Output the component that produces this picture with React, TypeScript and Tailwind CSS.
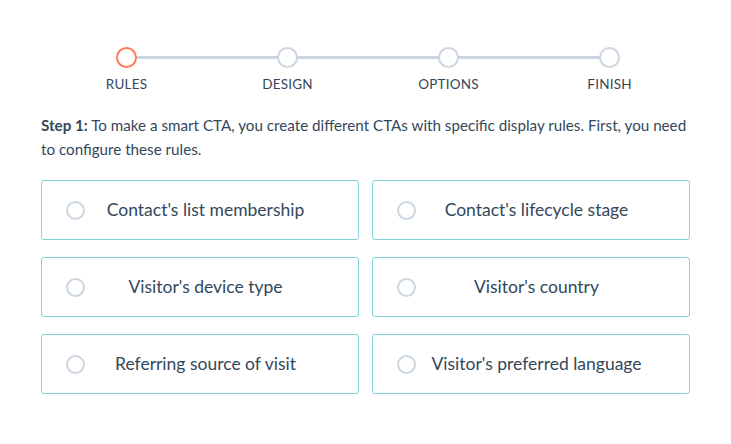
import React from 'react';

const steps = ['RULES', 'DESIGN', 'OPTIONS', 'FINISH'];

const rules = [
  "Contact's list membership",
  "Contact's lifecycle stage",
  "Visitor's device type",
  "Visitor's country",
  'Referring source of visit',
  "Visitor's preferred language",
];

const Stepper: React.FC = () => (
  <div className="relative grid grid-cols-4 pl-[5px]">
    {/* connecting line between the first and last markers */}
    <div className="absolute top-[9px] left-[12.5%] right-[12.5%] h-[3px] bg-[#cbd6e2] ml-[2px]" />
    {steps.map((s, i) => (
      <div key={s} className="relative flex flex-col items-center">
        <div
          className={`w-[21px] h-[21px] rounded-full bg-white border-[2.5px] ${
            i === 0 ? 'border-[#ff7a59]' : 'border-[#cbd6e2]'
          }`}
        />
        <span className="mt-[6px] text-[13.5px] text-[#33475b] tracking-[0.2px]">{s}</span>
      </div>
    ))}
  </div>
);

const RuleCard: React.FC<{ label: string }> = ({ label }) => (
  <button className="flex items-center h-[60px] px-6 bg-white border border-[#7fd1de] rounded-[3px] text-left">
    <span className="w-[19px] h-[19px] rounded-full border-2 border-[#cbd6e2] shrink-0" />
    <span className="flex-1 text-center pr-[8px] text-[17.5px] text-[#33475b]">{label}</span>
  </button>
);

export default function App() {
  return (
    <div
      className="w-[731px] h-[444px] bg-white px-[41px] pt-[47px]"
      style={{ fontFamily: 'Lato, "Open Sans", sans-serif' }}
    >
      <Stepper />
      <p className="mt-[19px] text-[15.2px] leading-[24px] text-[#33475b]">
        <span className="font-bold">Step 1:</span> To make a smart CTA, you create different CTAs with specific
        display rules. First, you need to configure these rules.
      </p>
      <div className="mt-[19px] grid grid-cols-2 gap-x-[13px] gap-y-[17px] w-[649px]">
        {rules.map(r => (
          <RuleCard key={r} label={r} />
        ))}
      </div>
    </div>
  );
}
